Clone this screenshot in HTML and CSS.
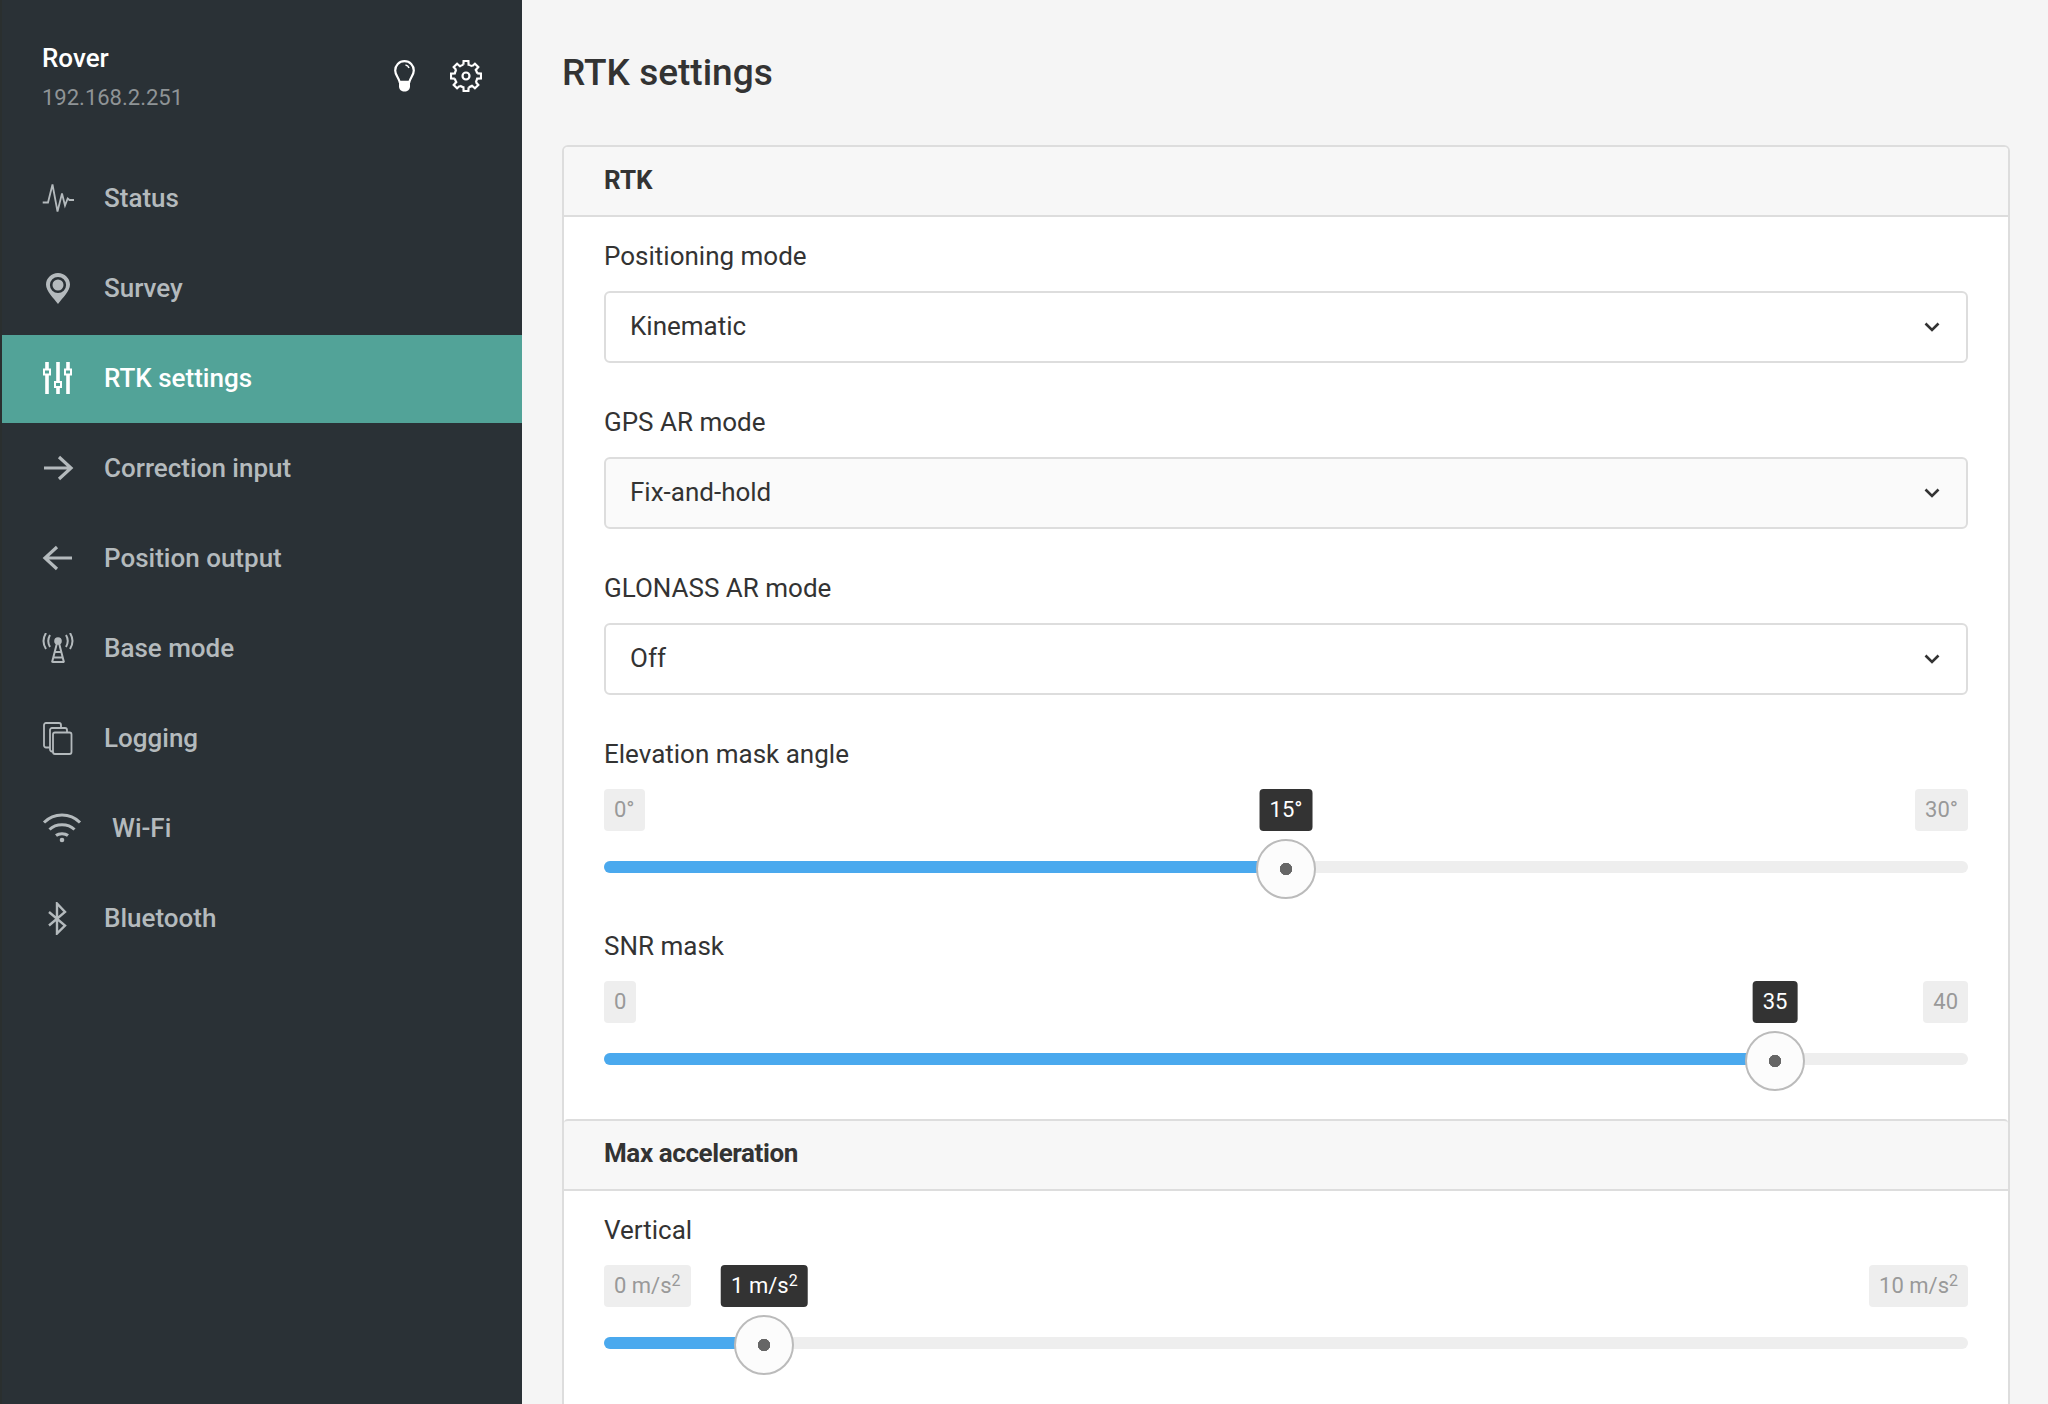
FILE: index.html
```html
<!DOCTYPE html>
<html lang="en">
<head>
    <meta charset="UTF-8">
    <title>RTK settings</title>
    <link rel="stylesheet" href="styles.css">
</head>
<body>
<aside class="sidebar">
    <div class="device">
        <div class="device-info">
            <div class="device-name">Rover</div>
            <div class="device-ip">192.168.2.251</div>
        </div>
        <svg class="bulb" width="21" height="32" viewBox="0 0 21 32"><path d="M10.5 1.2C5 1.2 1.2 5.5 1.2 10.5c0 4.2 3 6.6 4.4 11.3h9.8c1.4-4.700 4.400-7.100 4.400-11.300C19.800 5.500 16 1.200 10.500 1.200z" fill="none" stroke="#fff" stroke-width="2.200"/><path d="M5 21h11v5.500c0 3-2.500 5-5.500 5S5 29.500 5 26.500z" fill="#fff"/><path d="M11.500 5c1.800.3 3 1.300 3.500 3" fill="none" stroke="#fff" stroke-width="1.500"/></svg>
        <svg class="gear" width="32" height="32" viewBox="0 0 32 32">
            <g fill="none" stroke="#fff" stroke-width="2.200">
                <path id="tooth" d="M13.400 4.800L13.600 1H18.400L18.600 4.800A11.500 11.500 0 0 1 22.080 6.240"/>
                <use href="#tooth" transform="rotate(45 16 16)"/>
                <use href="#tooth" transform="rotate(90 16 16)"/>
                <use href="#tooth" transform="rotate(135 16 16)"/>
                <use href="#tooth" transform="rotate(180 16 16)"/>
                <use href="#tooth" transform="rotate(225 16 16)"/>
                <use href="#tooth" transform="rotate(270 16 16)"/>
                <use href="#tooth" transform="rotate(315 16 16)"/>
                <circle cx="16" cy="16" r="3.500"/>
            </g>
        </svg>
    </div>
    <nav class="nav">
        <a class="nav-item">
            <svg class="nav-icon" width="32" height="30" viewBox="0 0 32 30"><path d="M.7 19.500H6L10.500 1.500l5 27L20 10.500l3 12 2.700-7 1.800 1.500H32" fill="none" stroke="#b4babd" stroke-width="1.800"/></svg>
            Status
        </a>
        <a class="nav-item">
            <svg class="nav-icon" width="32" height="32" viewBox="0 0 32 32"><path d="M16 1C9.400 1 4 6.300 4 12.500 4 19 11.500 26 16 32c4.500-6 12-13 12-19.500C28 6.300 22.600 1 16 1z" fill="#b4babd"/><circle cx="16" cy="13" r="6.800" fill="none" stroke="#2a3136" stroke-width="2.600"/><circle cx="16" cy="13" r="4" fill="#b4babd"/></svg>
            Survey
        </a>
        <a class="nav-item active">
            <svg class="nav-icon" width="32" height="32" viewBox="0 0 32 32">
                <g stroke="#fff" stroke-width="3.600"><path d="M5 0v32M16 0v32M26 0v32"/></g>
                <g fill="#52a398" stroke="#fff" stroke-width="2"><rect x="2" y="7.500" width="6" height="5"/><rect x="13" y="20" width="6" height="5"/><rect x="23" y="7.500" width="6" height="5"/></g>
            </svg>
            RTK settings
        </a>
        <a class="nav-item">
            <svg class="nav-icon" width="32" height="26" viewBox="0 0 32 26"><path d="M2 13h27M17 2l12 11-12 11" fill="none" stroke="#b4babd" stroke-width="3.200"/></svg>
            Correction input
        </a>
        <a class="nav-item">
            <svg class="nav-icon" width="32" height="26" viewBox="0 0 32 26"><path d="M30 13H3M15 2L3 13l12 11" fill="none" stroke="#b4babd" stroke-width="3.200"/></svg>
            Position output
        </a>
        <a class="nav-item">
            <svg class="nav-icon" width="32" height="30" viewBox="0 0 32 30">
                <g fill="none" stroke="#b4babd">
                    <path stroke-width="2" d="M4 0Q-1 8 4 16M8 2Q4.500 8 8 14M24 2Q27.500 8 24 14M28 0Q33 8 28 16"/>
                    <path stroke-width="2" d="M15 10L10 29.500M17 10L22 29.500M12.500 19h7M11 24.500h10M10 29h12"/>
                </g>
                <circle cx="16" cy="8" r="3.800" fill="#b4babd"/>
            </svg>
            Base mode
        </a>
        <a class="nav-item">
            <svg class="nav-icon" width="32" height="33" viewBox="0 0 32 33">
                <g fill="none" stroke="#b4babd" stroke-width="1.800">
                    <rect x="11" y="10.500" width="18.500" height="21.500" rx="2"/>
                    <path d="M11 29.500h-1a2 2 0 0 1-2-2V8a2 2 0 0 1 2-2h13a2 2 0 0 1 2 2v2.500"/>
                    <path d="M8 25.500H4a2 2 0 0 1-2-2V3a2 2 0 0 1 2-2h13a2 2 0 0 1 2 2v3"/>
                </g>
            </svg>
            Logging
        </a>
        <a class="nav-item">
            <svg class="nav-icon" width="40" height="30" viewBox="0 0 40 30">
                <g fill="none" stroke="#b4babd" stroke-width="3">
                    <path d="M2 9.500C12-.5 28-.5 38 9.500"/>
                    <path d="M7.500 16.500C14 10 26 10 32.500 16.500"/>
                    <path d="M14 22.500C17 20 23 20 26 22.500"/>
                </g>
                <circle cx="20" cy="27" r="2.300" fill="#b4babd"/>
            </svg>
            Wi-Fi
        </a>
        <a class="nav-item">
            <svg class="nav-icon" width="32" height="33" viewBox="0 0 32 33"><path d="M7 10L23 23.500 15 31.500V1.500L23 10 7 23.500" fill="none" stroke="#b4babd" stroke-width="2.400"/></svg>
            Bluetooth
        </a>
    </nav>
</aside>

<main class="main">
    <h1 class="page-title">RTK settings</h1>
    <section class="card">
        <h2 class="card-head">RTK</h2>
        <div class="card-body">
            <label class="field-label">Positioning mode</label>
            <div class="select">
                Kinematic
                <svg width="16" height="10" viewBox="0 0 16 10"><path d="M1.500 1.500L8 8l6.500-6.500" fill="none" stroke="#333" stroke-width="2.600"/></svg>
            </div>
            <label class="field-label">GPS AR mode</label>
            <div class="select hover">
                Fix-and-hold
                <svg width="16" height="10" viewBox="0 0 16 10"><path d="M1.500 1.500L8 8l6.500-6.500" fill="none" stroke="#333" stroke-width="2.600"/></svg>
            </div>
            <label class="field-label">GLONASS AR mode</label>
            <div class="select">
                Off
                <svg width="16" height="10" viewBox="0 0 16 10"><path d="M1.500 1.500L8 8l6.500-6.500" fill="none" stroke="#333" stroke-width="2.600"/></svg>
            </div>
            <label class="field-label">Elevation mask angle</label>
            <div class="slider" style="--p:.5">
                <div class="slider-ends"><span class="slider-tag">0°</span><span class="slider-tag">30°</span></div>
                <span class="slider-value">15°</span>
                <div class="slider-track"><div class="slider-fill"></div></div>
                <div class="slider-handle"></div>
            </div>
            <label class="field-label">SNR mask</label>
            <div class="slider" style="--p:.875">
                <div class="slider-ends"><span class="slider-tag">0</span><span class="slider-tag">40</span></div>
                <span class="slider-value">35</span>
                <div class="slider-track"><div class="slider-fill"></div></div>
                <div class="slider-handle"></div>
            </div>
        </div>
        <h2 class="card-head sub">Max acceleration</h2>
        <div class="card-body">
            <label class="field-label">Vertical</label>
            <div class="slider" style="--p:.1">
                <div class="slider-ends"><span class="slider-tag">0 m/s<sup>2</sup></span><span class="slider-tag">10 m/s<sup>2</sup></span></div>
                <span class="slider-value">1 m/s<sup>2</sup></span>
                <div class="slider-track"><div class="slider-fill"></div></div>
                <div class="slider-handle"></div>
            </div>
        </div>
    </section>
</main>
</body>
</html>
```

FILE: styles.css
```css
* {
    margin: 0;
    padding: 0;
    box-sizing: border-box;
}
body {
    display: flex;
    height: 100vh;
    overflow: hidden;
    background-color: #f5f5f5;
    border-left: 2px solid #2a2f2f;
    font-family: Roboto, "Liberation Sans", sans-serif;
    font-size: 26px;
    color: #333;
}

/* sidebar */
.sidebar {
    flex: none;
    width: 520px;
    background-color: #2a3136;
}
.device {
    display: flex;
    align-items: flex-start;
    height: 155px;
    padding: 41px 40px 0 40px;
}
.device-info {
    flex: 1;
}
.device-name {
    font-size: 26px;
    line-height: 34px;
    font-weight: 500;
    color: #fff;
}
.device-ip {
    margin-top: 8px;
    font-size: 22px;
    line-height: 30px;
    color: #8f9496;
}
.bulb {
    margin-top: 19px;
}
.gear {
    margin: 19px 0 0 35px;
}
.nav {
    display: flex;
    flex-direction: column;
    gap: 2px;
}
.nav-item {
    display: flex;
    align-items: center;
    gap: 30px;
    height: 88px;
    padding: 0 0 2px 40px;
    font-weight: 500;
    color: #b4babd;
}
.nav-item.active {
    background-color: #52a398;
    color: #fff;
}
.nav-icon {
    flex: none;
}

/* main column */
.main {
    flex: 1;
    padding: 0 38px 0 40px;
}
.page-title {
    height: 145px;
    padding-top: 51px;
    font-size: 37px;
    line-height: 44px;
    font-weight: 500;
}
.card {
    background-color: #fff;
    border: 2px solid #ddd;
    border-radius: 6px;
}
.card-head {
    height: 70px;
    padding-left: 40px;
    font-size: 26px;
    line-height: 67px;
    font-weight: 700;
    background-color: #f7f7f7;
    border-bottom: 2px solid #ddd;
    border-radius: 4px 4px 0 0;
}
.card-head.sub {
    height: 72px;
    border-top: 2px solid #ddd;
    line-height: 65px;
    letter-spacing: -.4px;
}
.card-body {
    padding: 20px 40px 0;
}
.field-label {
    display: block;
    margin-bottom: 16px;
    font-size: 26px;
    line-height: 38px;
}

/* select */
.select {
    display: flex;
    align-items: center;
    justify-content: space-between;
    height: 72px;
    margin-bottom: 40px;
    padding: 0 26px 2px 24px;
    background-color: #fff;
    border: 2px solid #ddd;
    border-radius: 6px;
}
.select svg {
    margin-top: 2px;
}
.select.hover {
    background-color: #fafafa;
}

/* range slider */
.slider {
    position: relative;
    height: 84px;
    margin-bottom: 54px;
}
.slider-ends {
    display: flex;
    justify-content: space-between;
    margin-bottom: 30px;
}
.slider-tag,
.slider-value {
    height: 42px;
    padding: 0 10px;
    font-size: 22px;
    line-height: 42px;
    border-radius: 4px;
}
.slider-tag {
    background-color: #eee;
    color: #999;
}
.slider-value {
    position: absolute;
    top: 0;
    left: calc((100% - 60px) * var(--p) + 30px);
    transform: translateX(-50%);
    background-color: #333;
    color: #fff;
    white-space: nowrap;
}
.slider sup {
    font-size: 16px;
    line-height: 0;
    vertical-align: 7px;
}
.slider-track {
    height: 12px;
    background-color: #eee;
    border-radius: 6px;
    overflow: hidden;
}
.slider-fill {
    height: 100%;
    width: calc((100% - 60px) * var(--p) + 30px);
    background-color: #4aa9ee;
}
.slider-handle {
    position: absolute;
    top: 50px;
    left: calc((100% - 60px) * var(--p));
    width: 60px;
    height: 60px;
    background: radial-gradient(circle, #666 6px, #fcfcfc 6.500px);
    border: 2px solid #bbb;
    border-radius: 50%;
}

/* the card runs on below the fold */
.card-body:last-child {
    padding-bottom: 80px;
}
```
